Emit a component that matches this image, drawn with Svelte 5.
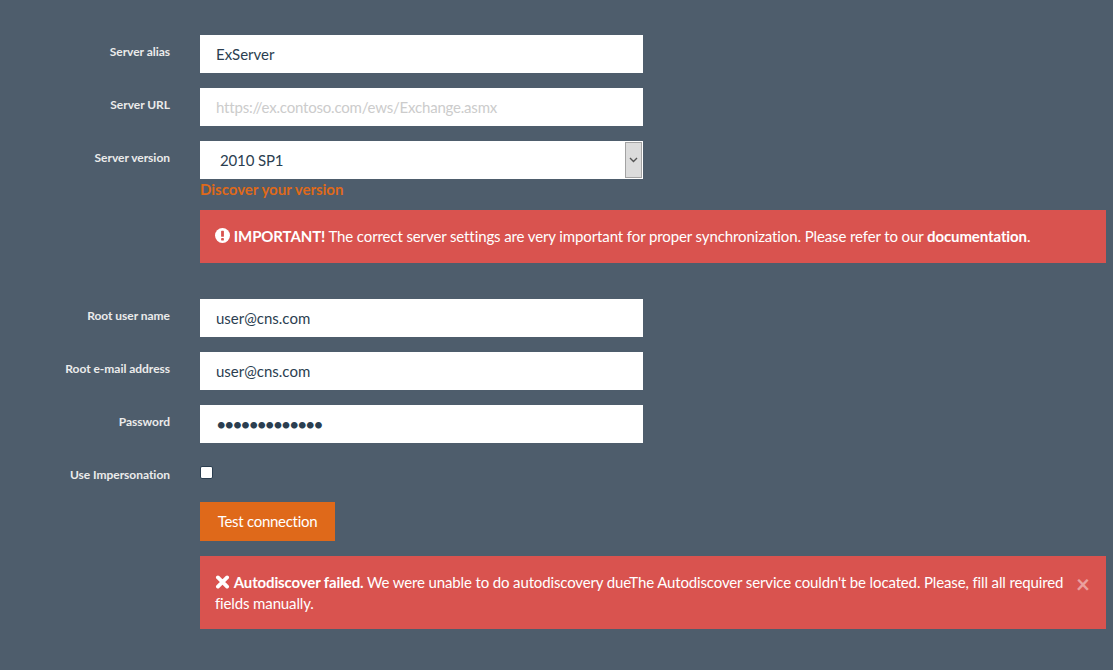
<script>
  const impIcon = "M8 0a8 8 0 1 0 0 16A8 8 0 0 0 8 0z";
</script>

<main class="page">
  <div class="row">
    <label class="lbl" for="alias">Server alias</label>
    <input id="alias" class="ctl" type="text" value="ExServer" />
  </div>
  <div class="row">
    <label class="lbl" for="url">Server URL</label>
    <input id="url" class="ctl" type="text" placeholder="https://ex.contoso.com/ews/Exchange.asmx" />
  </div>
  <div class="row tight">
    <label class="lbl" for="ver">Server version</label>
    <div class="field">
      <div class="selectwrap">
        <select id="ver" class="ctl sel">
          <option>2010 SP1</option>
        </select>
        <span class="arrow" aria-hidden="true">
          <svg width="9" height="6" viewBox="0 0 9 6"><path d="M1 1l3.5 3.5L8 1" fill="none" stroke="#555" stroke-width="1.4" /></svg>
        </span>
      </div>
      <a class="discover" href="#top">Discover your version</a>
    </div>
  </div>
  <div class="alert first">
    <svg class="ic" width="15" height="15" viewBox="0 0 16 16" aria-hidden="true">
      <path d={impIcon} fill="#fff" />
      <rect x="6.5" y="2.8" width="3" height="6.6" rx="0.6" fill="#d9534f" />
      <rect x="6.5" y="10.6" width="3" height="2.6" rx="0.5" fill="#d9534f" />
    </svg>
    <b>IMPORTANT!</b> The correct server settings are very important for proper synchronization. Please refer to our <b>documentation</b>.
  </div>

  <div class="row">
    <label class="lbl" for="root">Root user name</label>
    <input id="root" class="ctl" type="text" value="user@cns.com" />
  </div>
  <div class="row">
    <label class="lbl" for="mail">Root e-mail address</label>
    <input id="mail" class="ctl" type="text" value="user@cns.com" />
  </div>
  <div class="row">
    <label class="lbl" for="pw">Password</label>
    <input id="pw" class="ctl pw" type="password" value="abcdefghijklm" />
  </div>
  <div class="row check">
    <label class="lbl" for="imp">Use Impersonation</label>
    <input id="imp" class="cb" type="checkbox" />
  </div>
  <div class="row btnrow">
    <button class="btn" type="button">Test connection</button>
  </div>
  <div class="alert last">
    <p>
      <svg class="ic x" width="15" height="14" viewBox="0 0 14 14" aria-hidden="true">
        <path d="M2.4 2.4l9.2 9.2M11.6 2.4l-9.2 9.2" fill="none" stroke="#fff" stroke-width="3.8" stroke-linecap="round" />
      </svg>
      <b>Autodiscover failed.</b> We were unable to do autodiscovery dueThe Autodiscover service couldn't be located. Please, fill all required fields manually.
    </p>
    <span class="close">×</span>
  </div>
</main>

<style>
  :global(body) {
    margin: 0;
    background: #4e5d6c;
    font-family: Lato, "Open Sans", sans-serif;
    font-size: 15px;
    color: #fff;
  }
  .page {
    box-sizing: border-box;
    height: 670px;
    overflow: hidden;
    padding: 35px 7px 0 0;
  }
  .row {
    display: flex;
    align-items: flex-start;
    gap: 30px;
    margin-bottom: 15px;
  }
  .row.tight {
    margin-bottom: 10px;
  }
  .lbl {
    width: 170px;
    flex: none;
    padding-top: 8px;
    text-align: right;
    font-size: 12px;
    line-height: 17px;
    font-weight: 700;
    color: #ebebeb;
    letter-spacing: -0.03px;
  }
  .ctl {
    box-sizing: border-box;
    display: block;
    width: 443px;
    height: 38px;
    margin: 0;
    padding: 0 16px 1px;
    border: 0;
    border-radius: 0;
    outline: 0;
    background: #fff;
    font: 15px Lato, sans-serif;
    color: #2b3e50;
    flex: none;
  }
  .ctl::placeholder {
    color: #cccccc;
    opacity: 1;
    letter-spacing: -0.2px;
  }
  .pw {
    font-size: 18px;
    letter-spacing: -2.34px;
  }
  .field {
    width: 443px;
    flex: none;
  }
  .selectwrap {
    position: relative;
    height: 38px;
  }
  .sel {
    appearance: none;
    padding-left: 16px;
    padding-right: 20px;
    padding-bottom: 0;
    text-indent: 4px;
    letter-spacing: -0.15px;
  }
  .arrow {
    position: absolute;
    right: 1px;
    top: 1px;
    width: 17px;
    height: 36px;
    box-sizing: border-box;
    display: flex;
    align-items: center;
    justify-content: center;
    background: #dcdcdc;
    border: 1px solid #a3a3a3;
  }
  .discover {
    display: block;
    height: 21px;
    line-height: 21px;
    font-size: 15px;
    font-weight: 700;
    color: #df691a;
    text-decoration: none;
  }
  .alert {
    box-sizing: border-box;
    margin-left: 200px;
    background: #d9534f;
    color: #fff;
    font-size: 15px;
    line-height: 21px;
    letter-spacing: -0.11px;
  }
  .alert.first {
    height: 53px;
    padding: 16px 15px 0;
    margin-bottom: 36px;
  }
  .alert.last {
    display: flex;
    align-items: flex-start;
    gap: 6px;
    height: 73px;
    padding: 16px 15px 0;
    letter-spacing: -0.135px;
  }
  .alert.last p {
    margin: 0;
    flex: 1;
  }
  .alert b {
    font-weight: 700;
  }
  .ic {
    vertical-align: -1px;
    margin-right: 0;
  }
  .close {
    color: #fff;
    opacity: 0.45;
    font-size: 24px;
    font-weight: 700;
    line-height: 24px;
    width: 13px;
    flex: none;
    margin-right: 2px;
  }
  .row.check {
    margin-bottom: 20px;
    height: 24px;
  }
  .cb {
    appearance: none;
    box-sizing: border-box;
    width: 13px;
    height: 13px;
    margin: 8px 0 0 0;
    background: #fff;
    border: 1px solid #2b3e50;
    border-radius: 2px;
    flex: none;
  }
  .check .lbl {
    padding-top: 8px;
  }
  .btnrow {
    padding-left: 200px;
    gap: 0;
  }
  .btn {
    box-sizing: border-box;
    height: 39px;
    width: 135px;
    padding: 0 0 2px;
    border: 0;
    border-radius: 0;
    background: #df691a;
    color: #fff;
    font: 15px Lato, sans-serif;
    letter-spacing: -0.28px;
  }
</style>
